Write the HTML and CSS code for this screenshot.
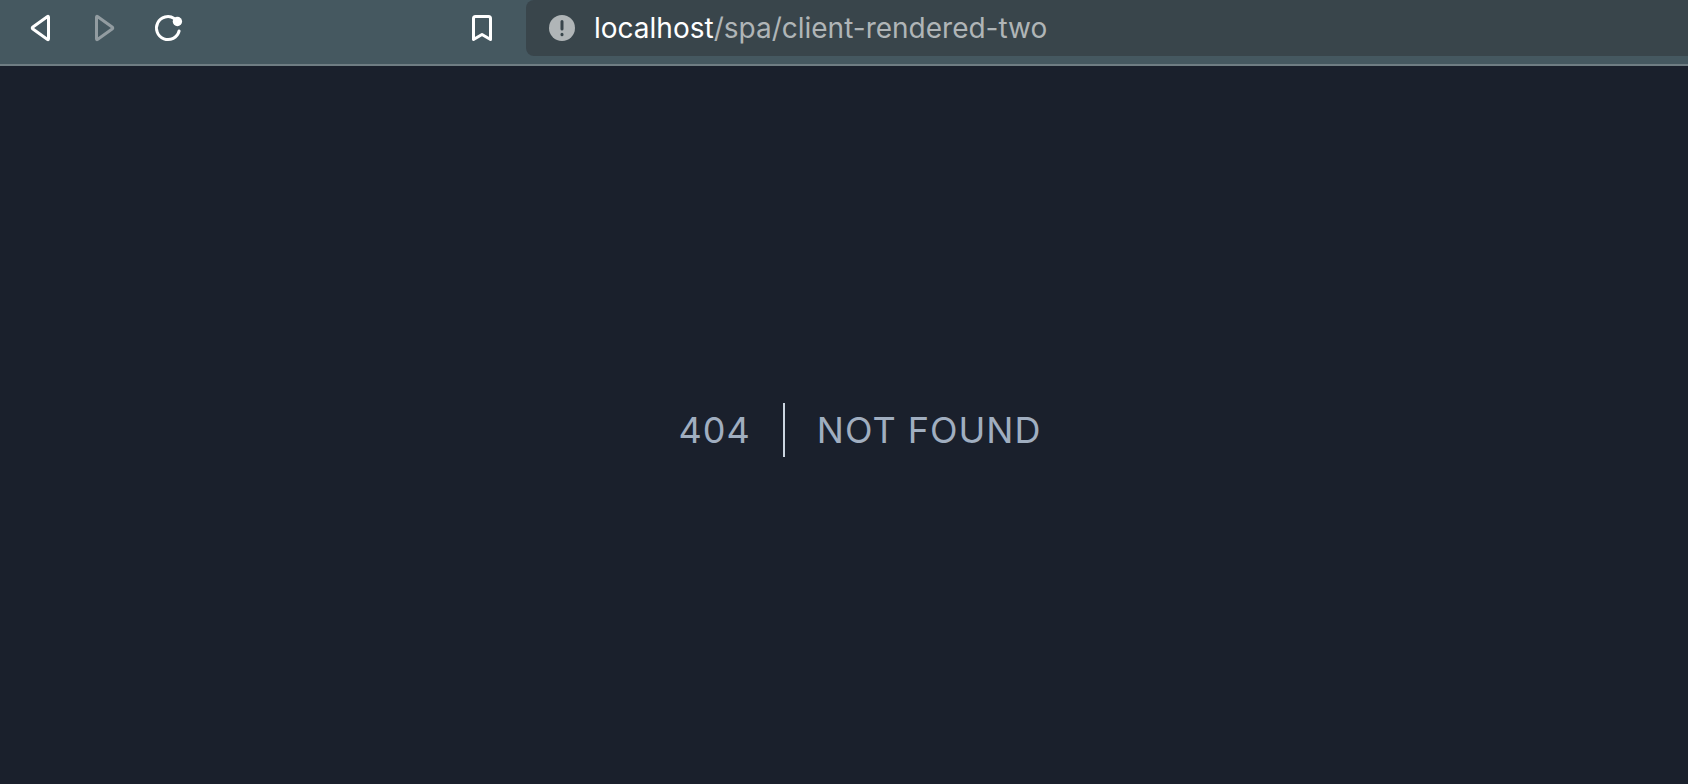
FILE: index.html
```html
<!DOCTYPE html>
<html lang="en">
<head>
    <meta charset="UTF-8">
    <meta name="viewport" content="width=device-width, initial-scale=1.0">
    <title>Not Found</title>
    <link rel="stylesheet" href="styles.css">
</head>
<body>
    <!-- Toolbar -->
    <header class="toolbar">
        <nav class="nav-buttons">
            <button type="button" aria-label="Back">
                <svg viewBox="0 0 32 32"><path d="M24.500 5.200v21.600q0 1.400-1.300.5L8.900 17q-1.300-1 0-2L23.200 4.700q1.300-.9 1.300.5z"/></svg>
            </button>
            <button type="button" aria-label="Forward" disabled>
                <svg viewBox="0 0 32 32"><path d="M8.500 5.200v21.600q0 1.400 1.300.5L24.100 17q1.300-1 0-2L9.800 4.700q-1.300-.9-1.300.5z"/></svg>
            </button>
            <button type="button" aria-label="Reload">
                <svg viewBox="0 0 32 32"><path d="M22.200 6.400A11.500 11.500 0 1 0 27.100 19"/><circle class="dot" cx="25.400" cy="9.500" r="4.700"/></svg>
            </button>
        </nav>
        <button type="button" aria-label="Bookmark">
            <svg viewBox="0 0 32 32"><path d="M7.500 6.500q0-2 2-2h13q2 0 2 2v21L16 22.500l-8.500 5z"/></svg>
        </button>
        <div class="address-bar">
            <svg class="info" viewBox="0 0 26 26" aria-hidden="true">
                <circle cx="13" cy="13" r="13"/>
                <path d="M13 6.500v7.500M13 19.300v.4"/>
            </svg>
            <div class="url" role="textbox" aria-label="Address" contenteditable="true" spellcheck="false"><span class="host">localhost</span>/spa/client-rendered-two</div>
        </div>
    </header>

    <!-- Error page -->
    <main class="page">
        <div class="error">
            <div class="code">404</div>
            <div class="message">Not Found</div>
        </div>
    </main>
</body>
</html>
```

FILE: styles.css
```css
* {
    box-sizing: border-box;
}
body {
    margin: 0;
    min-height: 100vh;
    display: flex;
    flex-direction: column;
    background-color: #1a202c;
    font-family: Inter, "Liberation Sans", sans-serif;
}
/* Toolbar */
.toolbar {
    display: flex;
    align-items: flex-start;
    padding: 0 0 8px 24px;
    background-color: #455860;
    border-bottom: 2px solid #6f7d83;
}
.nav-buttons {
    display: flex;
    gap: 32px;
    margin-right: 282px;
}
.toolbar button {
    display: flex;
    align-items: center;
    width: 32px;
    height: 56px;
    padding: 0;
    border: none;
    background: none;
    color: #ffffff;
    cursor: pointer;
}
.toolbar button:disabled {
    color: #929ca1;
    cursor: default;
}
.toolbar button svg {
    width: 32px;
    height: 32px;
    fill: none;
    stroke: currentColor;
    stroke-width: 3;
    stroke-linecap: round;
    stroke-linejoin: round;
}
.toolbar button .dot {
    fill: currentColor;
    stroke: none;
}
.address-bar {
    flex: 1;
    display: flex;
    align-items: center;
    gap: 19px;
    height: 56px;
    margin-left: 28px;
    padding-left: 23px;
    background-color: #39454b;
    border-radius: 8px 0 0 8px;
}
.info {
    width: 26px;
    height: 26px;
    fill: #b0b5b7;
    stroke: #39454b;
    stroke-width: 3;
    stroke-linecap: round;
}
.info circle {
    stroke: none;
}
.url {
    flex: 1;
    font-size: 28px;
    line-height: 40px;
    white-space: nowrap;
    color: #b0b5b7;
    outline: none;
}
.host {
    color: #ffffff;
}
/* Error page */
.page {
    flex: 1;
    display: flex;
    align-items: center;
    justify-content: center;
    padding-top: 10px;
}
.error {
    display: flex;
    font-size: 36px;
    line-height: 54px;
    letter-spacing: 1px;
    color: #a0aec0;
}
.code {
    padding: 0 32px;
    border-right: 2px solid #cbd5e0;
}
.message {
    margin-left: 32px;
    text-transform: uppercase;
}
```
